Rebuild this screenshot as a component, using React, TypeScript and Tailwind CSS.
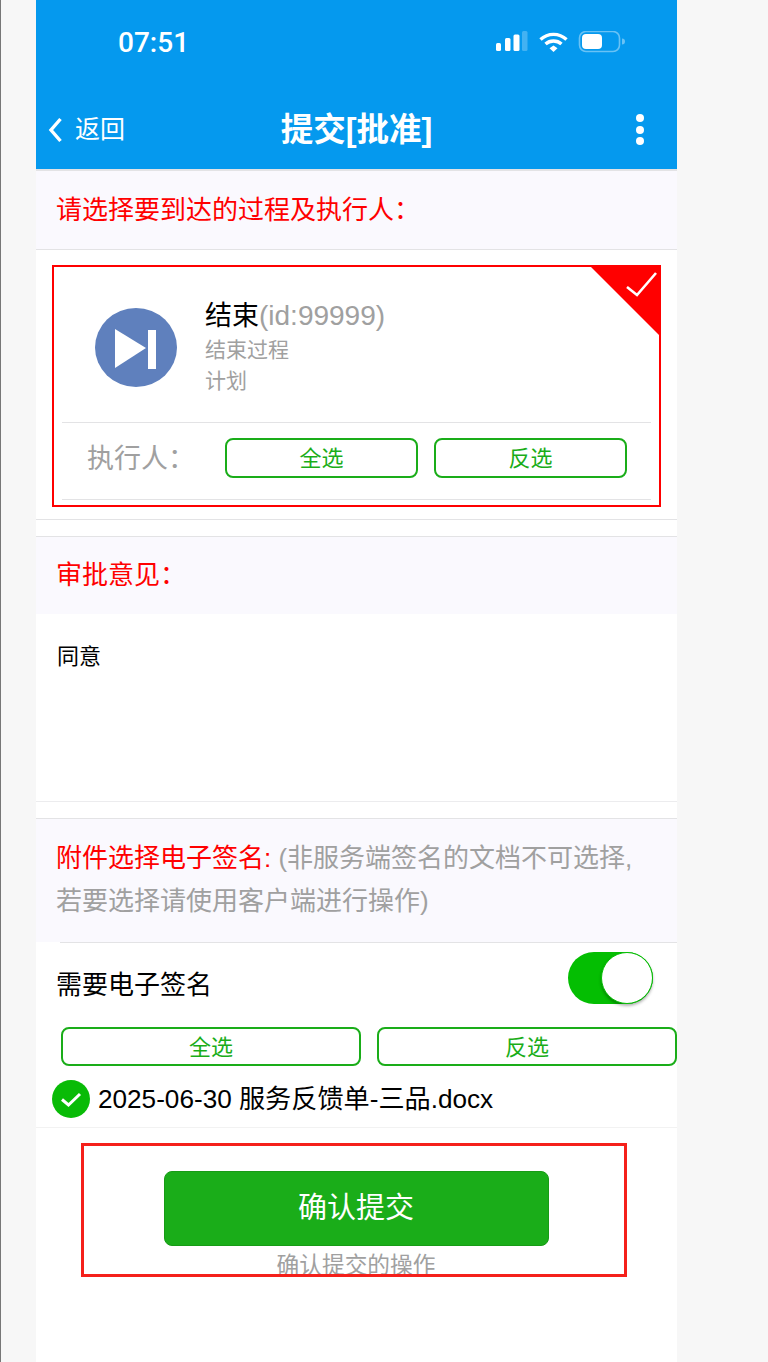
const cjk = "font-['Liberation_Sans','Noto_Sans_CJK_SC',sans-serif]";

const SectionTitle = ({ children }: { children: React.ReactNode }) => (
  <div className="flex h-[78px] items-center border-t border-[#e3e3e5] bg-[#faf9fe] pl-[20px] text-[26px] text-[#ff0000]">
    {children}
  </div>
);

const OutlineButton = ({ label, className }: { label: string; className: string }) => (
  <div
    className={`flex items-center justify-center rounded-[8px] border-2 border-[#1aad19] bg-white pt-[2px] text-[22px] leading-none text-[#1aad19] ${className}`}
  >
    {label}
  </div>
);

const StatusIcons = () => (
  <svg width="130" height="24" viewBox="0 0 130 24" className="text-white">
    <rect x="0" y="12" width="5" height="8" rx="1.5" fill="white" />
    <rect x="9" y="7" width="5.5" height="13" rx="1.5" fill="white" />
    <rect x="17.5" y="3.5" width="6" height="16.5" rx="1.5" fill="white" />
    <rect x="26" y="0" width="5.5" height="20" rx="1.5" fill="white" fillOpacity="0.25" />
    <path d="M44.5 8.5a19 19 0 0 1 26 0" fill="none" stroke="white" strokeWidth="3.4" />
    <path d="M49.5 13a12 12 0 0 1 16 0" fill="none" stroke="white" strokeWidth="3.4" />
    <path d="M53.5 17.2 L57.5 14.6 L61.5 17.2 L57.5 21 Z" fill="white" />
    <rect x="83.5" y="0.5" width="40" height="20" rx="6.5" fill="none" stroke="white" strokeOpacity="0.4" strokeWidth="1.6" />
    <rect x="86" y="3" width="20" height="15" rx="4" fill="white" />
    <path d="M126 7.5a3 3 0 0 1 0 6z" fill="white" fillOpacity="0.4" />
  </svg>
);

export default function App() {
  return (
    <div className={`flex h-[1362px] w-[768px] overflow-hidden border-l border-[#777777] bg-[#f7f7f7] ${cjk}`}>
      <div className="ml-[35px] flex h-full w-[641px] flex-col bg-white">
        <header className="h-[171px] shrink-0 border-b-2 border-[#e3e3e5] bg-[#0599ee] text-white">
          <div className="flex h-[84px] items-center justify-between pl-[82px] pr-[51px] pt-[1px]">
            <span className="font-['Roboto'] text-[28px] font-medium">07:51</span>
            <StatusIcons />
          </div>
          <div className="grid h-[85px] grid-cols-[1fr_auto_1fr] items-center px-[12px] pb-[2px] pt-[8px]">
            <div className="flex items-center gap-[13px]">
              <svg width="14" height="24" viewBox="0 0 14 24" className="overflow-visible">
                <path d="M12.5 1 L3 12 L12.5 23" fill="none" stroke="white" strokeWidth="3.4" />
              </svg>
              <span className="mt-[1px] text-[25px]">返回</span>
            </div>
            <h1 className="mt-[1px] text-[32.5px] font-bold">提交[批准]</h1>
            <div className="flex flex-col items-end gap-[3.5px] pr-[21px]">
              <span className="size-[8px] rounded-full bg-white" />
              <span className="size-[8px] rounded-full bg-white" />
              <span className="size-[8px] rounded-full bg-white" />
            </div>
          </div>
        </header>

        <div className="flex h-[79px] shrink-0 items-center border-b border-[#e3e3e5] bg-[#faf9fe] pl-[20px] text-[26px] text-[#ff0000]">
          请选择要到达的过程及执行人：
        </div>

        <div className="h-[270px] shrink-0 border-b border-[#e3e3e5] pl-[16px] pr-[16px] pt-[15px]">
          <div className="relative h-[242px] border-2 border-[#ff0000] px-[8px]">
            <svg width="72" height="72" viewBox="0 0 72 72" className="absolute right-[-2px] top-[-2px]">
              <path d="M0 0 H72 V72 Z" fill="#ff0000" />
              <path d="M38 22 L48 30 L67 8" fill="none" stroke="white" strokeWidth="2.6" />
            </svg>
            <div className="flex h-[156px] items-center border-b border-[#e3e3e5] pl-[33px] pt-[6px]">
              <svg width="82" height="79" viewBox="0 0 82 79" className="shrink-0">
                <ellipse cx="41" cy="39.5" rx="41" ry="39.5" fill="#5f80bd" />
                <path d="M20 21 L51 40 L20 60 Z" fill="white" />
                <rect x="53" y="22" width="8" height="39" fill="white" />
              </svg>
              <div className="ml-[28px] flex flex-col">
                <div className="text-[27px] leading-[36px] text-black">
                  结束<span className="text-[28px] text-[#a0a0a0]">(id:99999)</span>
                </div>
                <div className="text-[21px] leading-[31px] text-[#a0a0a0]">结束过程</div>
                <div className="mb-[2px] text-[21px] leading-[31px] text-[#a0a0a0]">计划</div>
              </div>
            </div>
            <div className="flex h-[77px] items-center border-b border-[#e3e3e5] pb-[6px] pl-[25px] pr-[24px]">
              <span className="mt-[3px] w-[138px] text-[27px] text-[#a0a0a0]">执行人：</span>
              <OutlineButton label="全选" className="h-[40px] w-[193px]" />
              <OutlineButton label="反选" className="ml-[16px] h-[40px] w-[193px]" />
            </div>
          </div>
        </div>

        <div className="h-[16px] shrink-0" />
        <SectionTitle>审批意见：</SectionTitle>

        <div className="h-[188px] shrink-0 border-b border-[#ececee] pl-[21px] pt-[27px] text-[22px] leading-[32px] text-black">
          同意
        </div>

        <div className="h-[16px] shrink-0" />
        <div className="h-[124px] shrink-0 border-t border-[#e3e3e5] bg-[#faf9fe] pl-[20px] pt-[18px] text-[26px] leading-[43px] text-[#a0a0a0]">
          <span className="text-[#ff0000]">附件选择电子签名:</span> (非服务端签名的文档不可选择,
          <br />
          若要选择请使用客户端进行操作)
        </div>

        <div className="ml-[24px] flex h-[85px] shrink-0 items-start justify-between border-t border-[#e3e3e5] pr-[24px] pt-[9px]">
          <span className="ml-[-4px] mt-[18px] text-[26px] leading-[30px] text-black">需要电子签名</span>
          <div className="flex h-[52px] w-[85px] justify-end rounded-full bg-[#04be02]">
            <div className="size-[52px] rounded-full border border-[#04be02] bg-white shadow-[0_2px_3px_rgba(0,0,0,0.3)]" />
          </div>
        </div>

        <div className="flex shrink-0 gap-[16px] pl-[25px]">
          <OutlineButton label="全选" className="h-[39px] w-[300px]" />
          <OutlineButton label="反选" className="h-[39px] w-[300px]" />
        </div>

        <div className="flex h-[62px] shrink-0 items-center gap-[8px] border-b border-[#f2f2f2] pl-[16px] pt-[7px]">
          <svg width="38" height="38" viewBox="0 0 38 38" className="mt-[-3px] shrink-0">
            <circle cx="19" cy="19" r="19" fill="#09bb07" />
            <path d="M10 19.5 L16.5 25 L28 14" fill="none" stroke="white" strokeWidth="3" />
          </svg>
          <span className="text-[26.15px] text-black">2025-06-30 服务反馈单-三品.docx</span>
        </div>

        <div className="ml-[45px] mt-[15px] h-[134px] w-[546px] shrink-0 overflow-hidden border-[3px] border-[#f5201b] pt-[25px]">
          <div className="mx-auto flex h-[75px] w-[385px] translate-x-[2px] items-center justify-center rounded-[8px] border border-[#179b16] bg-[#1aad19] text-[29px] text-white">
            确认提交
          </div>
          <div className="mt-[2px] translate-x-[2px] text-center text-[22.7px] leading-[34px] text-[#a0a0a0]">确认提交的操作</div>
        </div>
      </div>
    </div>
  );
}
